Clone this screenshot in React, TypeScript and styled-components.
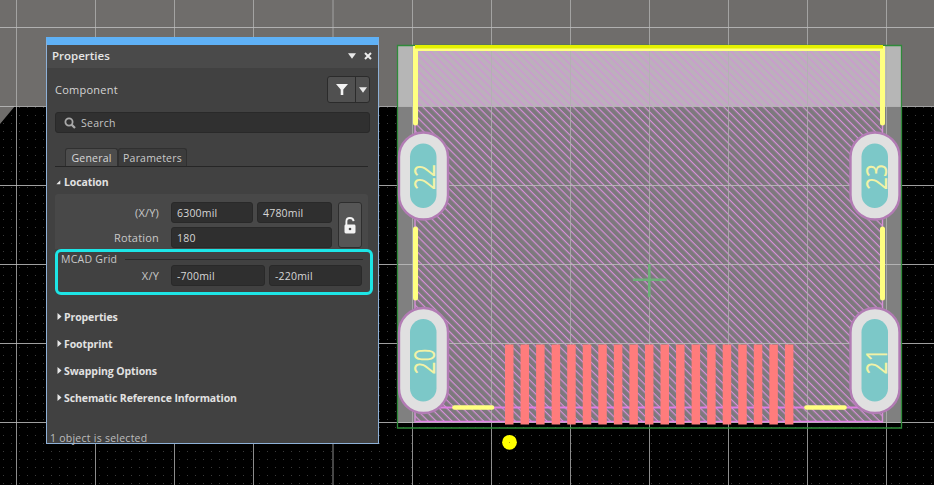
import React from "react";
import styled, { createGlobalStyle } from "styled-components";

const GlobalStyle = createGlobalStyle`
  html, body {
    margin: 0;
    background: #000;
    overflow: hidden;
  }
`;

const UI_FONT = `"Open Sans", "Noto Sans", "Liberation Sans", sans-serif`;

const Stage = styled.div`
  position: relative;
  width: 934px;
  height: 485px;
  overflow: hidden;
  background: #000;
  font-family: ${UI_FONT};
`;

const Canvas = styled.svg`
  position: absolute;
  inset: 0;
  display: block;
`;

const PadLabel = styled.text`
  font-family: "Open Sans", "Liberation Sans", sans-serif;
  font-size: 30px;
  font-weight: 400;
  fill: #f2f2a6;
`;

const Panel = styled.section`
  position: absolute;
  left: 46px;
  top: 37px;
  width: 331px;
  height: 398px;
  display: flex;
  flex-direction: column;
  background: #414141;
  border: 1px solid #8eb1d8;
  border-top: 8px solid #5fb1f6;
  color: #d8d8d8;
`;

const TitleBar = styled.header`
  height: 23px;
  flex: none;
  box-sizing: border-box;
  display: flex;
  align-items: center;
  justify-content: space-between;
  padding: 0 6px 2px 5px;
  background: #4a4a4a;
`;

const Title = styled.h1`
  margin: 0;
  font-size: 11.5px;
  font-weight: 600;
  color: #e6e6e6;
`;

const TitleIcons = styled.div`
  display: flex;
  align-items: center;
  gap: 8px;
`;

const Body = styled.div`
  flex: 1;
  display: flex;
  flex-direction: column;
  padding: 8px 8px 0 8px;
`;

const KindRow = styled.div`
  height: 27px;
  display: flex;
  align-items: center;
  justify-content: space-between;
`;

const KindLabel = styled.span`
  font-size: 11px;
  letter-spacing: 0.25px;
  color: #d4d4d4;
`;

const FilterGroup = styled.div`
  display: flex;
  height: 27px;
  box-sizing: border-box;
  border: 1px solid #2b2b2b;
  border-radius: 3px;
  background: #505050;
`;

const FilterPart = styled.div<{ $w: number; $divided?: boolean }>`
  width: ${(p) => p.$w}px;
  box-sizing: content-box;
  display: flex;
  align-items: center;
  justify-content: center;
  border-left: ${(p) => (p.$divided ? "1px solid #2b2b2b" : "none")};
`;

const SearchBox = styled.div`
  margin-top: 9px;
  height: 21px;
  box-sizing: border-box;
  display: flex;
  align-items: center;
  gap: 5px;
  padding-left: 8px;
  background: #303030;
  border: 1px solid #292929;
  border-radius: 3px;
  font-size: 10.5px;
  letter-spacing: 0.25px;
  color: #c4c4c4;
`;

const Tabs = styled.div`
  margin-top: 15px;
  margin-right: 2px;
  height: 19px;
  box-sizing: border-box;
  display: flex;
  padding-left: 10px;
  border-bottom: 1px solid #262626;
`;

const Tab = styled.div<{ $active?: boolean; $w: number }>`
  width: ${(p) => p.$w}px;
  box-sizing: border-box;
  display: flex;
  align-items: center;
  justify-content: center;
  font-size: 10.5px;
  letter-spacing: 0.2px;
  color: ${(p) => (p.$active ? "#d8d8d8" : "#cacaca")};
  background: ${(p) => (p.$active ? "#4c4c4c" : "#3c3c3c")};
  border: 1px solid #303030;
  border-bottom: none;
  border-radius: 3px 3px 0 0;
`;

const SectionHead = styled.div<{ $mt?: number; $open?: boolean }>`
  display: flex;
  align-items: center;
  box-sizing: border-box;
  gap: ${(p) => (p.$open ? 3 : 1)}px;
  height: 27px;
  padding-top: ${(p) => (p.$open ? 3 : 0)}px;
  padding-left: 1px;
  margin-top: ${(p) => p.$mt ?? 0}px;
  font-size: 10.5px;
  font-weight: 700;
  letter-spacing: -0.1px;
  color: #e2e2e2;
`;

const LocationBlock = styled.div`
  margin-right: 2px;
  height: 55px;
  box-sizing: border-box;
  padding: 8px 6px 0 0;
  display: flex;
  gap: 6px;
  background: #484848;
  border-radius: 3px 3px 0 0;
`;

const FieldRows = styled.div`
  display: flex;
  flex-direction: column;
  gap: 4px;
`;

const FieldRow = styled.div`
  display: flex;
  align-items: center;
  height: 21px;
`;

const FieldLabel = styled.label`
  width: 104px;
  flex: none;
  text-align: right;
  font-size: 11px;
  letter-spacing: 0.2px;
  color: #c8c8c8;
`;

const FieldGroup = styled.div`
  display: flex;
  gap: 4px;
  margin-left: 12px;
`;

const Field = styled.div<{ $w: number }>`
  width: ${(p) => p.$w}px;
  height: 21px;
  box-sizing: border-box;
  display: flex;
  align-items: center;
  padding-left: 5px;
  background: #2f2f2f;
  border: 1px solid #292929;
  border-radius: 3px;
  font-size: 10.5px;
  letter-spacing: 0.2px;
  color: #d6d6d6;
`;

const LockButton = styled.div`
  width: 24px;
  height: 46px;
  box-sizing: border-box;
  display: flex;
  align-items: center;
  justify-content: center;
  padding-top: 1px;
  background: #565656;
  border: 1px solid #2e2e2e;
  border-radius: 3px;
`;

const McadBox = styled.div`
  margin-right: -3px;
  height: 46px;
  box-sizing: border-box;
  border: 3px solid #1de5e6;
  border-radius: 6px;
  padding: 0 7px 0 3px;
  display: flex;
  flex-direction: column;
`;

const McadTitle = styled.div`
  height: 14px;
  display: flex;
  align-items: center;
  gap: 8px;
  font-size: 10.5px;
  letter-spacing: 0.25px;
  color: #c8c8c8;

  &::after {
    content: "";
    flex: 1;
    height: 1px;
    background: #2a2a2a;
  }
`;

const McadRow = styled(FieldRow)`
  margin-top: -1px;
  margin-left: -6px;
`;

const Spacer = styled.div`
  flex: 1;
`;

const Status = styled.footer`
  flex: none;
  padding-left: 3px;
  height: 12px;
  line-height: 14px;
  font-size: 10.5px;
  letter-spacing: 0.25px;
  color: #bdbdbd;
`;

const gridX = [16.5, 95.5, 174.5, 253.5, 333, 412.5, 491.5, 570.5, 649.5, 728.5, 807.5, 886.5];
const gridY = [27.5, 106.5, 185.5, 264.5, 343.5, 422.5];

const barX = Array.from({ length: 19 }, (_, i) => 505 + i * 15.55);

const Pad = ({ x, y, h, label }: { x: number; y: number; h: number; label: string }) => {
  const cy = y + h / 2;
  return (
    <g>
      <rect x={x} y={y} width={49} height={h} rx={24.5} fill="#e0e0e0" stroke="#b27cb4" strokeWidth={2.4} />
      <rect x={x + 11} y={y + 11} width={26.5} height={h - 22.5} rx={13.25} fill="#7cc8c8" />
      <PadLabel
        transform={`translate(${x + 36} ${cy + 1}) rotate(-90)`}
        textAnchor="middle"
        textLength={26}
        lengthAdjust="spacingAndGlyphs"
      >
        {label}
      </PadLabel>
    </g>
  );
};

const Board = () => (
  <Canvas width={934} height={485} viewBox="0 0 934 485">
    <defs>
      <pattern id="dots" width="8" height="8" patternUnits="userSpaceOnUse">
        <rect x="3" y="3" width="1" height="1" fill="#3a3a3a" />
      </pattern>
      <pattern id="hatch" width="5.6" height="5.6" patternUnits="userSpaceOnUse" patternTransform="rotate(45)">
        <rect width="5.6" height="5.6" fill="#7d797d" />
        <rect width="5.6" height="1.2" fill="#d68fd8" />
      </pattern>
      <pattern id="hatchTop" width="5.6" height="5.6" patternUnits="userSpaceOnUse" patternTransform="rotate(45)">
        <rect width="5.6" height="5.6" fill="#bcb0bc" />
        <rect width="5.6" height="1.6" fill="#cb9bce" />
      </pattern>
    </defs>

    <rect width="934" height="485" fill="#000" />
    <rect width="934" height="485" fill="url(#dots)" />
    <polygon points="0,0 934,0 934,106 15,106 0,124" fill="#6f6d6b" />

    <rect x="397" y="106" width="504" height="317" fill="#808080" />
    <rect x="397" y="46" width="504" height="60" fill="#b6b6b6" />
    <rect x="415" y="50" width="468" height="56" fill="url(#hatchTop)" />
    <rect x="415" y="106" width="468" height="317" fill="url(#hatch)" />

    {gridX.map((x) => (
      <line key={x} x1={x} x2={x} y1={0} y2={485} stroke="#b0b0b0" strokeOpacity={0.8} strokeWidth={1} />
    ))}
    {gridY.map((y) => (
      <line key={y} x1={0} x2={934} y1={y} y2={y} stroke="#bcbcbc" strokeOpacity={0.85} strokeWidth={1} />
    ))}

    <path d="M397.5 428 V45.5 H901.5 V428 Z" fill="none" stroke="#2f8a3a" strokeWidth={1.3} />

    <path d="M649.3 264 V297 M633 279.7 H666.5" stroke="#6eb07a" strokeWidth={2.6} fill="none" />

    <line x1={415.5} y1={421.5} x2={882} y2={421.5} stroke="#e07fe4" strokeWidth={1.4} />
    <line x1={415} y1={407.5} x2={883} y2={407.5} stroke="#e07fe4" strokeWidth={2} />
    <line x1={415} y1={120} x2={415} y2={423} stroke="#d68fd8" strokeWidth={1.4} />
    <line x1={882.5} y1={120} x2={882.5} y2={423} stroke="#d68fd8" strokeWidth={1.4} />

    {barX.map((x) => (
      <rect key={x} x={x} y={344.5} width={8.5} height={80} fill="#ff7c7c" />
    ))}

    <Pad x={399} y={132.5} h={87} label="22" />
    <Pad x={850.5} y={132.5} h={87} label="23" />
    <Pad x={399} y={308} h={105} label="20" />
    <Pad x={850.5} y={308} h={105} label="21" />

    <path d="M415.5 123 V48.5 H882.5 V123" fill="none" stroke="#ffff80" strokeWidth={5} strokeLinecap="round" />
    <rect x={415} y={45} width={468} height={3.5} fill="#e4f000" />
    <line x1={415.5} y1={229} x2={415.5} y2={298} stroke="#ffff80" strokeWidth={5} strokeLinecap="round" />
    <line x1={882.5} y1={229} x2={882.5} y2={298} stroke="#ffff80" strokeWidth={5} strokeLinecap="round" />
    <line x1={454.5} y1={407.5} x2={492} y2={407.5} stroke="#ffff80" strokeWidth={4.6} strokeLinecap="round" />
    <line x1={806.5} y1={407.5} x2={844.5} y2={407.5} stroke="#ffff80" strokeWidth={4.6} strokeLinecap="round" />

    <circle cx={509.5} cy={442.3} r={7.4} fill="#ffff00" />
    <rect x={509} y={442} width={1} height={1} fill="#c0a000" />
  </Canvas>
);

const Arrow = ({ dir, size = 6, color = "#e8e8e8" }: { dir: "right" | "down" | "corner"; size?: number; color?: string }) => {
  const points = dir === "right" ? "1.5,0 5.5,3.5 1.5,7" : dir === "down" ? "0,1 7,1 3.5,6" : "6,0.5 6,6 0.5,6";
  return (
    <svg width={size} height={size} viewBox="0 0 7 7">
      <polygon points={points} fill={color} />
    </svg>
  );
};

const App: React.FC = () => {
  return (
    <Stage>
      <GlobalStyle />
      <Board />
      <Panel>
        <TitleBar>
          <Title>Properties</Title>
          <TitleIcons>
            <Arrow dir="down" size={8} />
            <svg width="8" height="8" viewBox="0 0 8 8">
              <path d="M1 1 L7 7 M7 1 L1 7" stroke="#ececec" strokeWidth="2" />
            </svg>
          </TitleIcons>
        </TitleBar>
        <Body>
          <KindRow>
            <KindLabel>Component</KindLabel>
            <FilterGroup>
              <FilterPart $w={27}>
                <svg width="14" height="13" viewBox="0 0 14 13">
                  <path d="M1 1 H13 L8.3 6.5 V12 H5.7 V6.5 Z" fill="#f2f2f2" />
                </svg>
              </FilterPart>
              <FilterPart $w={13} $divided>
                <Arrow dir="down" size={8} />
              </FilterPart>
            </FilterGroup>
          </KindRow>

          <SearchBox>
            <svg width="12" height="12" viewBox="0 0 12 12">
              <circle cx="5" cy="5" r="3.6" fill="none" stroke="#a8a8a8" strokeWidth="1.8" />
              <path d="M7.6 7.6 L11 11" stroke="#a8a8a8" strokeWidth="2.2" />
            </svg>
            Search
          </SearchBox>

          <Tabs>
            <Tab $active $w={53}>General</Tab>
            <Tab $w={69}>Parameters</Tab>
          </Tabs>

          <SectionHead $open>
            <Arrow dir="corner" size={5} />
            Location
          </SectionHead>

          <LocationBlock>
            <FieldRows>
              <FieldRow>
                <FieldLabel>(X/Y)</FieldLabel>
                <FieldGroup>
                  <Field $w={82}>6300mil</Field>
                  <Field $w={75}>4780mil</Field>
                </FieldGroup>
              </FieldRow>
              <FieldRow>
                <FieldLabel>Rotation</FieldLabel>
                <FieldGroup>
                  <Field $w={161}>180</Field>
                </FieldGroup>
              </FieldRow>
            </FieldRows>
            <LockButton>
              <svg width="12" height="17" viewBox="0 0 12 17">
                <path d="M2.4 8 V4.4 C2.4 2.2 3.9 1 5.9 1 C7.9 1 9.4 2.2 9.6 4.2" fill="none" stroke="#f4f4f4" strokeWidth="1.9" />
                <rect x="0.5" y="7.5" width="11" height="9" rx="1.4" fill="#f4f4f4" />
                <circle cx="6" cy="12" r="1.3" fill="#4a4a4a" />
              </svg>
            </LockButton>
          </LocationBlock>

          <McadBox>
            <McadTitle>MCAD Grid</McadTitle>
            <McadRow>
              <FieldLabel>X/Y</FieldLabel>
              <FieldGroup>
                <Field $w={94}>-700mil</Field>
                <Field $w={93}>-220mil</Field>
              </FieldGroup>
            </McadRow>
          </McadBox>

          <SectionHead $mt={8}><Arrow dir="right" size={7} />Properties</SectionHead>
          <SectionHead><Arrow dir="right" size={7} />Footprint</SectionHead>
          <SectionHead><Arrow dir="right" size={7} />Swapping Options</SectionHead>
          <SectionHead><Arrow dir="right" size={7} />Schematic Reference Information</SectionHead>
          <Spacer />
        </Body>
        <Status>1 object is selected</Status>
      </Panel>
    </Stage>
  );
};

export default App;
